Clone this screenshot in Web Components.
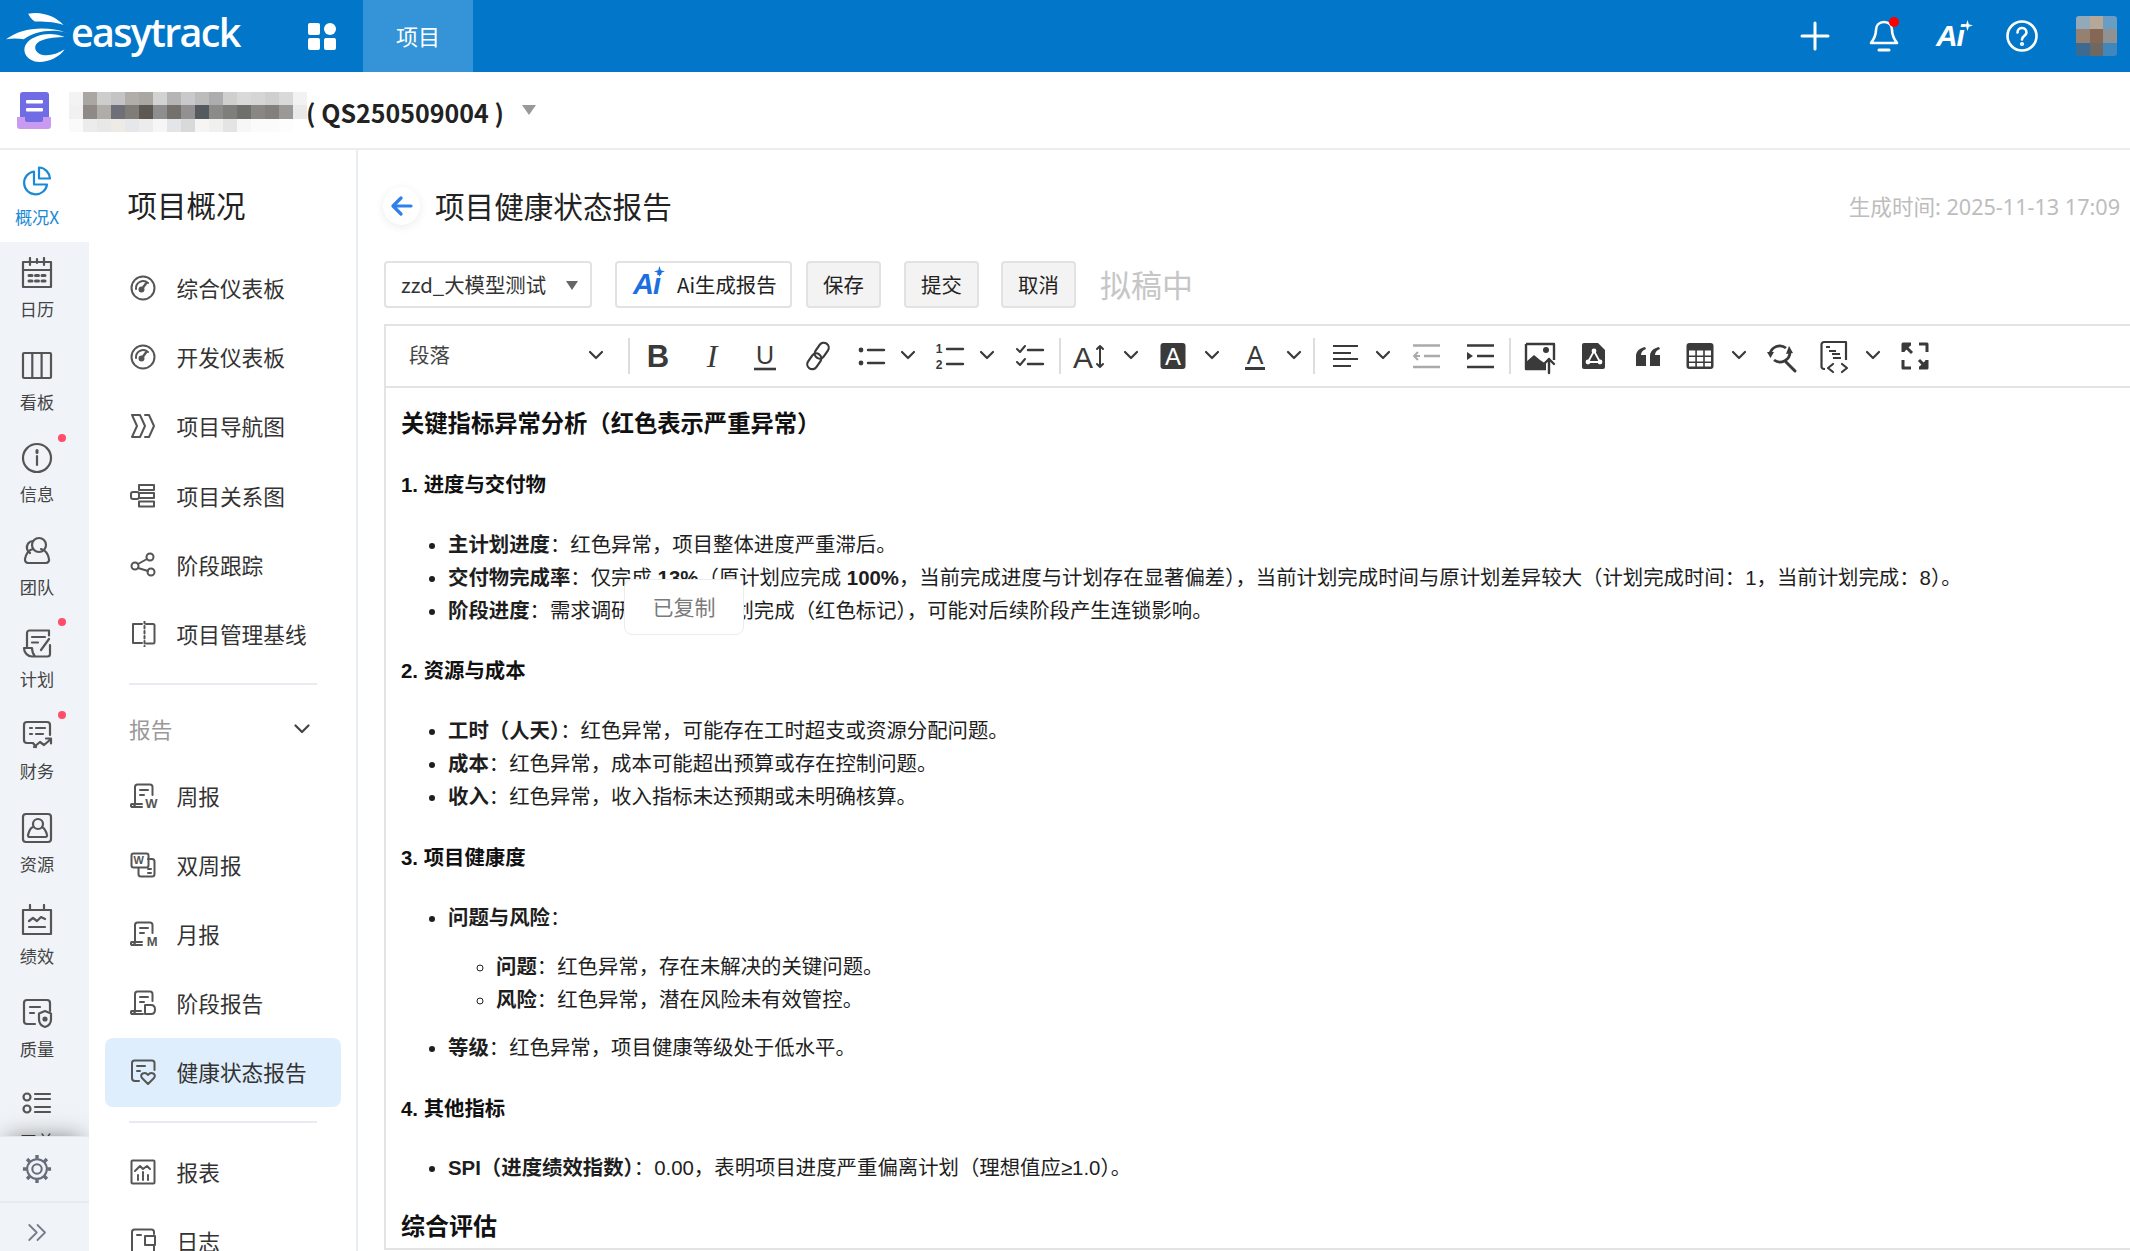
<!DOCTYPE html>
<html lang="zh">
<head>
<meta charset="utf-8">
<title>项目健康状态报告</title>
<style>
  html, body { margin: 0; padding: 0; }
  body {
    width: 2130px;
    height: 1251px;
    overflow: hidden;
    background: #fff;
    font-family: "Noto Sans CJK SC", "Noto Sans", sans-serif;
    display: flex;
    flex-direction: column;
  }
  .row { flex: 1; display: flex; min-height: 0; }
</style>
</head>
<body>
<et-topbar></et-topbar>
<et-projectbar></et-projectbar>
<div class="row">
  <et-rail>
    <et-rail-item icon="pie" active>概况X</et-rail-item>
    <et-rail-item icon="calendar">日历</et-rail-item>
    <et-rail-item icon="board">看板</et-rail-item>
    <et-rail-item icon="info" dot>信息</et-rail-item>
    <et-rail-item icon="team">团队</et-rail-item>
    <et-rail-item icon="plan" dot>计划</et-rail-item>
    <et-rail-item icon="finance" dot>财务</et-rail-item>
    <et-rail-item icon="resource">资源</et-rail-item>
    <et-rail-item icon="perf">绩效</et-rail-item>
    <et-rail-item icon="quality">质量</et-rail-item>
    <et-rail-item icon="orders">工单</et-rail-item>
  </et-rail>
  <et-sidenav>
    <et-nav-item icon="gauge">综合仪表板</et-nav-item>
    <et-nav-item icon="gauge">开发仪表板</et-nav-item>
    <et-nav-item icon="navmap">项目导航图</et-nav-item>
    <et-nav-item icon="relation">项目关系图</et-nav-item>
    <et-nav-item icon="stage">阶段跟踪</et-nav-item>
    <et-nav-item icon="baseline">项目管理基线</et-nav-item>
    <et-nav-group>报告</et-nav-group>
    <et-nav-item icon="week">周报</et-nav-item>
    <et-nav-item icon="biweek">双周报</et-nav-item>
    <et-nav-item icon="month">月报</et-nav-item>
    <et-nav-item icon="phase">阶段报告</et-nav-item>
    <et-nav-item icon="health" active>健康状态报告</et-nav-item>
    <et-nav-rule></et-nav-rule>
    <et-nav-item icon="chart">报表</et-nav-item>
    <et-nav-item icon="log">日志</et-nav-item>
  </et-sidenav>
  <et-report>
    <et-editor>
      <h2>关键指标异常分析（红色表示严重异常）</h2>
      <h3>1. 进度与交付物</h3>
      <ul>
        <li><b>主计划进度</b>：红色异常，项目整体进度严重滞后。</li>
        <li><b>交付物完成率</b>：仅完成 <b>13%</b>（原计划应完成 <b>100%</b>，当前完成进度与计划存在显著偏差），当前计划完成时间与原计划差异较大（计划完成时间：1，当前计划完成：8）。</li>
        <li><b>阶段进度</b>：需求调研阶段未按计划完成（红色标记），可能对后续阶段产生连锁影响。</li>
      </ul>
      <h3>2. 资源与成本</h3>
      <ul>
        <li><b>工时（人天）</b>：红色异常，可能存在工时超支或资源分配问题。</li>
        <li><b>成本</b>：红色异常，成本可能超出预算或存在控制问题。</li>
        <li><b>收入</b>：红色异常，收入指标未达预期或未明确核算。</li>
      </ul>
      <h3>3. 项目健康度</h3>
      <ul>
        <li><b>问题与风险</b>：
          <ul>
            <li><b>问题</b>：红色异常，存在未解决的关键问题。</li>
            <li><b>风险</b>：红色异常，潜在风险未有效管控。</li>
          </ul>
        </li>
        <li><b>等级</b>：红色异常，项目健康等级处于低水平。</li>
      </ul>
      <h3>4. 其他指标</h3>
      <ul>
        <li><b>SPI（进度绩效指数）</b>：0.00，表明项目进度严重偏离计划（理想值应≥1.0）。</li>
      </ul>
      <h2 class="last">综合评估</h2>
    </et-editor>
  </et-report>
</div>

<script>
const SANS = '"Noto Sans CJK SC", "Noto Sans", sans-serif';
const ARIAL = '"Liberation Sans", "Noto Sans CJK SC", sans-serif';
const STAR = 'M6 0l1.400 4.600L12 6 7.400 7.400 6 12 4.600 7.400 0 6l4.600-1.400z';

// all outline icons use currentColor so the host decides the colour
const ICONS = {
  pie: '<path d="M13 6.500a11.500 11.500 0 1 0 13 13H13z"/><path d="M18 2.500c6 .3 10.500 5 11 11H18z"/>',
  calendar: '<path d="M2 5h28v25H2z"/><path d="M2 13h28"/><path d="M9 1v7M16 2v4M23 1v7"/><path stroke-width="3" stroke-dasharray="3 3.500" d="M8 18.500h17M8 24h17"/>',
  board: '<rect x="2" y="3" width="28" height="25" rx="1"/><path d="M11.300 3v25M20.600 3v25"/>',
  info: '<circle cx="16" cy="16" r="14"/><path d="M16 14v9"/><path stroke-width="3" d="M16 8.500v2"/>',
  team: '<circle cx="18" cy="10" r="7"/><path d="M12 14c-4 1-7 5-8 10-.3 2 1 4 3 4h18c2 0 3.500-2 3-4-1-5-4-9-8-10"/><path d="M12 6c-4 0-7 4-6 8 .4 1.500 1.500 3 3 4"/>',
  plan: '<path d="M6 21V6c0-1.500 1-2.500 2.500-2.500H28v5M29 18v9c0 1.500-1 2.500-2.500 2.500H11C7 29.500 3 26 3 21h8c0 3 1 6 3 8.500"/><path d="M11 10h13M11 15.500h6M20 23l8-11"/>',
  finance: '<path d="M15 28l-3-4H6c-2 0-3-1-3-3V6c0-2 1-3 3-3h20c2 0 3 1 3 3v10"/><path d="M9 9h2M15 9h9M9 15h2M15 15h7"/><path d="M13 28l6-5 4 3 7-6M25 19.500h5v5"/>',
  resource: '<rect x="2" y="2" width="28" height="28" rx="3"/><circle cx="17" cy="12" r="5"/><path d="M12 15c-3 1-4 4-5 8 0 1 .5 2 1.500 2h16c1 0 2-1 1.500-2-1-4-3-7-5-8"/>',
  perf: '<path d="M2 6h28v24H2z"/><path d="M9 1v5M23 1v5"/><path d="M8 17l4-3 4 3 4-4 4 2M8 23h16"/>',
  quality: '<path d="M14 27H6c-2 0-3-1-3-3V6c0-2 1-3 3-3h20c2 0 3 1 3 3v8"/><path d="M9 10h10M9 16h4"/><path d="M24 14l6 2.500v6c0 4-3 6.500-6 7.500-3-1-6-3.500-6-7.500v-6z"/><circle cx="24" cy="22" r="1.500" fill="currentColor"/>',
  orders: '<circle cx="6" cy="8" r="3.500"/><circle cx="6" cy="20" r="3.500"/><path d="M14 5h15M14 10h15M14 18h15M14 23h15"/>',
  gauge: '<circle cx="13" cy="13" r="11.500"/><path d="M6 14a7.200 7.200 0 0 1 12-6"/><path d="M11.500 14.500l4.500-6" stroke-width="2.400"/><circle cx="11.500" cy="14.500" r="2" fill="currentColor"/>',
  navmap: '<path d="M2 2h8l5 11-5 11H2l5-11z"/><path d="M15 2h4l5 11-5 11h-4"/>',
  relation: '<rect x="1" y="9" width="8" height="7" rx="2"/><path d="M9 2h15v5H9zM9 10h15v5H9zM9 18.500h15v5H9z"/>',
  stage: '<circle cx="5" cy="14" r="3.500"/><circle cx="20" cy="5" r="3.500"/><circle cx="21" cy="20" r="3.500"/><path d="M8 12l9-5M8 16l10 3"/>',
  baseline: '<path d="M12 3H3v19h9M16 3h7c1 0 1.500.5 1.500 1.500V21c0 1-.5 1.500-1.500 1.500h-7"/><path stroke-dasharray="2.500 2.500" d="M14.500 0v26"/>',
  week: '<path d="M5 21V4c0-1.500 1-2.500 2.500-2.500H20c1.500 0 2.500 1 2.500 2.500v8M5 21c0 2-1 3-3 3h10"/><path d="M10 7h8M10 12h4M2 24c-1.500 0-1.500-3 0-3h10"/>',
  biweek: '<rect x="1.500" y="1.500" width="17" height="14" rx="2"/><path d="M18 7h4c1.500 0 2.500 1 2.500 2.500V22c0 1.500-1 2.500-2.500 2.500H11c-1.500 0-2.500-1-2.500-2.500v-6"/><path d="M18 17h3M18 21h3"/>',
  month: '<path d="M5 21V4c0-1.500 1-2.500 2.500-2.500H20c1.500 0 2.500 1 2.500 2.500v8M5 21c0 2-1 3-3 3h10"/><path d="M10 7h8M10 12h4M2 24c-1.500 0-1.500-3 0-3h10"/>',
  phase: '<path d="M5 21V4c0-1.500 1-2.500 2.500-2.500H20c1.500 0 2.500 1 2.500 2.500v7M5 21c0 2-1 3-3 3h11"/><path d="M10 7h8M10 12h4M2 24c-1.500 0-1.500-3 0-3h9"/><path d="M15 15h6c3 0 4 2 4 4.500S24 24 21 24h-6z"/>',
  health: '<path d="M9 22H5c-2 0-3-1-3-3V4c0-1.500 1-2.500 2.500-2.500H22c1.500 0 2.500 1 2.500 2.500v7"/><path d="M7 7h8M7 12h3"/><path d="M18 25l-6-6c-3-4 3-7 6-3 3-4 9-1 6 3z"/>',
  chart: '<rect x="1.500" y="1.500" width="23" height="23" rx="1"/><path d="M5 12l5-5 3 3 4-3 3 3"/><path stroke-dasharray="2 1" d="M8 21v-6M13 21v-8M18 21v-5"/>',
  log: '<path d="M24 6V4c0-1.500-1-2.500-2.500-2.500H4.500C3 1.500 2 2.500 2 4v19c0 1.500 1 2.500 2.500 2.500h17c1.500 0 2.500-1 2.500-2.500v-5"/><path d="M15 8h10v9H15z"/><path d="M7 7h4"/>',
  gear: '<circle cx="16" cy="16" r="5"/><circle cx="16" cy="16" r="10.500"/><path stroke-width="3.600" stroke-linecap="butt" d="M16 1v4M16 27v4M1 16h4M27 16h4M5.400 5.400l2.800 2.800M23.800 23.800l2.800 2.800M5.400 26.600l2.800-2.800M23.800 8.200l2.800-2.800"/>',
  twin: '<path d="M3 4l10 10L3 24M14 4l10 10-10 10"/>'
};
const SMALL = ['gauge', 'navmap', 'relation', 'stage', 'baseline', 'week', 'biweek', 'month', 'phase', 'health', 'chart', 'log'];

function icon(name, size, stroke) {
  const box = SMALL.includes(name) ? 26 : 32;
  return `<svg width="${size}" height="${size}" viewBox="0 0 ${box} ${box}" fill="none" stroke="currentColor" stroke-width="${stroke}" stroke-linecap="round" stroke-linejoin="round">${ICONS[name]}</svg>`;
}

class EtTopbar extends HTMLElement {
  constructor() {
    super();
    this.shadowDOM = this.attachShadow({ mode: 'open' });
  }

  connectedCallback() {
    const cells = ['#91a9b9', '#b6a898', '#6a9dc4', '#96806f', '#846755', '#8f9192', '#3c6a91', '#6d6862', '#3f87bd'];
    this.shadowDOM.innerHTML = `
      <style>
        :host {
          display: flex;
          align-items: center;
          height: 72px;
          flex: none;
          background: #0277c9;
          color: #fff;
        }
        .logo { display: flex; align-items: center; width: 308px; padding-left: 6px; box-sizing: border-box; }
        .logo span {
          font: 600 39.500px/50px "Open Sans", sans-serif;
          letter-spacing: -1.700px;
          margin-left: 3px;
          margin-top: -8px;
        }
        .apps { width: 55px; display: flex; }
        .tab {
          width: 110px;
          height: 72px;
          background: #3593d8;
          display: flex;
          align-items: center;
          justify-content: center;
          font: 400 22px/30px ${SANS};
          padding-bottom: 2px;
          box-sizing: border-box;
        }
        .tools { margin-left: auto; display: flex; align-items: center; padding-right: 13px; }
        .tool { width: 69px; display: flex; justify-content: center; position: relative; }
        .ai { font: italic 700 30px/32px "Liberation Sans", sans-serif; letter-spacing: -1px; position: relative; padding-right: 6px; }
        .ai svg { position: absolute; right: -3px; top: 0; }
        .dot { position: absolute; width: 10px; height: 10px; border-radius: 50%; background: #f00; left: 40px; top: -3px; }
        .avatar {
          display: grid;
          grid-template-columns: repeat(3, 13.700px);
          grid-auto-rows: 13.400px;
          margin-left: 19.500px;
          border-radius: 3px;
          overflow: hidden;
        }
      </style>
      <div class="logo">
        <svg width="62" height="58" viewBox="7 6 56 52" fill="#fff">
          <path d="M27 12C38 9 52 14 59 22 50 19 40 19 33 19 30 17 28 14 27 12Z"/>
          <path d="M7 35C20 25 42 22 62 29 48 25 32 28 23 35 18 34 12 34 7 35Z"/>
          <path d="M60 33C48 28 34 30 26 38 21 44 24 52 33 55 42 57 55 52 60 44 52 49 43 51 37 48 31 44 33 38 39 36 45 34 53 33 60 33Z"/>
        </svg>
        <span>easytrack</span>
      </div>
      <div class="apps">
        <svg width="28" height="27" viewBox="0 0 28 27" fill="#fff">
          <rect width="12" height="12" rx="2"/><circle cx="22" cy="6" r="6"/>
          <rect y="15" width="12" height="12" rx="2"/><rect x="16" y="15" width="12" height="12" rx="2"/>
        </svg>
      </div>
      <div class="tab">项目</div>
      <div class="tools">
        <div class="tool">
          <svg width="30" height="30" viewBox="0 0 30 30" stroke="#fff" stroke-width="3" stroke-linecap="round"><path d="M15 2v26M2 15h26"/></svg>
        </div>
        <div class="tool">
          <svg width="30" height="32" viewBox="0 0 30 32" fill="none" stroke="#fff" stroke-width="2.600" stroke-linecap="round" stroke-linejoin="round">
            <path d="M15 2c-5 0-8 3.500-8 8 0 6-2 9-5 13h26c-3-4-5-7-5-13 0-4.500-3-8-8-8z"/><path stroke-width="3" d="M10 30h10"/>
          </svg>
          <span class="dot"></span>
        </div>
        <div class="tool"><span class="ai">Ai<svg width="11" height="11" viewBox="0 0 12 12" fill="#fff"><path d="${STAR}"/></svg></span></div>
        <div class="tool">
          <svg width="32" height="32" viewBox="0 0 32 32" fill="none" stroke="#fff" stroke-width="2.600" stroke-linecap="round">
            <circle cx="16" cy="16" r="14.500"/><path d="M11.500 12.500c0-6 9-6 9 0 0 3-4.500 3.500-4.500 7"/><circle cx="16" cy="24" r=".8" fill="#fff"/>
          </svg>
        </div>
        <div class="avatar">${cells.map((c) => `<span style="background:${c}"></span>`).join('')}</div>
      </div>
    `;
  }
}

class EtProjectbar extends HTMLElement {
  constructor() {
    super();
    this.shadowDOM = this.attachShadow({ mode: 'open' });
  }

  connectedCallback() {
    // blurred project name, kept as a mosaic like in the screenshot
    const rows = [
      '#f3f3f3 #aaa6a2 #cdcdcd #c4c4c4 #b1aeaa #aaa7a3 #d2d2d2 #b5b5b5 #c9c9cb #bcbcbc #adadb0 #cfcfcd #d9d9d9 #d5d5d5 #cfcfcf #d9d9d9 #f2f2f2',
      '#f1f1f1 #8f8a85 #b0ada9 #6e6f78 #807d78 #5e5852 #8e8e8e #74706c #929190 #555a60 #8b8b8a #7e7e7c #6f6f6d #888785 #827f7c #9a9996 #e9e9e9',
      '#fafafa #ececec #e8e8e8 #eeeae6 #e5e7ea #ececec #f6f6f6 #e3e5e8 #d9d9d9 #f7f5f3 #f0f0f0 #e4e4e4 #f7f7f7 #fbfbfb #fbfbfb #fdfdfd #fff'
    ];
    const cells = rows.join(' ').split(' ').map((c) => `<span style="background:${c}"></span>`).join('');
    this.shadowDOM.innerHTML = `
      <style>
        :host {
          display: flex;
          align-items: center;
          height: 78px;
          flex: none;
          box-sizing: border-box;
          border-bottom: 2px solid #ececec;
          padding-left: 17px;
          background: #fff;
          position: relative;
          z-index: 2;
        }
        .mosaic {
          display: grid;
          grid-template-columns: repeat(17, 14px);
          grid-auto-rows: 13.400px;
          margin-left: 18px;
          margin-top: 4px;
        }
        .code {
          font: 700 25px/34px ${SANS};
          color: #222;
          margin-top: 4px;
          margin-left: -1px;
          white-space: pre;
        }
        .caret { width: 0; height: 0; border: 7.500px solid transparent; border-top: 10px solid #999; border-bottom: 0; margin: 0 0 0 18px; }
      </style>
      <svg width="34" height="37" viewBox="0 0 34 37">
        <path d="M3 3a3 3 0 0 1 3-3h23a3 3 0 0 1 3 3v22H3z" fill="#6f6ce6"/>
        <rect x="9" y="8" width="17" height="3.500" rx="1" fill="#fff"/>
        <rect x="9" y="16" width="17" height="3.500" rx="1" fill="#fff"/>
        <path d="M0 25h34v9a3 3 0 0 1-3 3H3a3 3 0 0 1-3-3z" fill="#c89bf0"/>
        <path d="M8 25h18v3a2 2 0 0 1-2 2H10a2 2 0 0 1-2-2z" fill="#6f6ce6"/>
      </svg>
      <div class="mosaic">${cells}</div>
      <div class="code">( QS250509004 )</div>
      <div class="caret"></div>
    `;
  }
}

class EtRail extends HTMLElement {
  constructor() {
    super();
    this.shadowDOM = this.attachShadow({ mode: 'open' });
  }

  connectedCallback() {
    this.shadowDOM.innerHTML = `
      <style>
        :host {
          display: flex;
          flex-direction: column;
          width: 89px;
          flex: none;
          background: #f0f4f8;
          color: #555;
          position: relative;
          overflow: hidden;
        }
        .items { flex: 1; min-height: 0; overflow: hidden; }
        .bottom {
          flex: none;
          height: 115px;
          background: #f0f4f8;
          border-top: 1px solid #e3e8f0;
          box-shadow: 0 -6px 22px -8px rgba(0, 0, 0, .5);
          box-sizing: border-box;
          position: relative;
        }
        .set { height: 64px; border-bottom: 2px solid #e6eaf2; display: flex; align-items: center; justify-content: center; color: #666c78; padding-right: 15px; }
        .more { height: 49px; box-sizing: border-box; display: flex; align-items: center; justify-content: center; color: #767c88; padding: 12px 12px 0 0; }
      </style>
      <div class="items"><slot></slot></div>
      <div class="bottom">
        <div class="set">${icon('gear', 30, 2.2)}</div>
        <div class="more">${icon('twin', 24, 2.4)}</div>
      </div>
    `;
  }
}

class EtRailItem extends HTMLElement {
  constructor() {
    super();
    this.shadowDOM = this.attachShadow({ mode: 'open' });
  }

  connectedCallback() {
    this.shadowDOM.innerHTML = `
      <style>
        :host {
          display: flex;
          flex-direction: column;
          align-items: center;
          height: 92.400px;
          box-sizing: border-box;
          padding: 15px 15px 0 0;
          position: relative;
          font: 400 17.200px/24px ${SANS};
          color: #444;
        }
        :host([active]) { background: #fff; color: #1b8ad6; }
        svg { color: #555; display: block; }
        :host([active]) svg { color: #1b8ad6; }
        .label { margin-top: 8px; white-space: nowrap; }
        .dot { position: absolute; left: 58px; top: 6.500px; width: 8px; height: 8px; border-radius: 50%; background: #ff4d6a; }
      </style>
      ${icon(this.getAttribute('icon'), 32, 2.2)}
      <div class="label"><slot></slot></div>
      ${this.hasAttribute('dot') ? '<span class="dot"></span>' : ''}
    `;
  }
}

class EtSidenav extends HTMLElement {
  constructor() {
    super();
    this.shadowDOM = this.attachShadow({ mode: 'open' });
  }

  connectedCallback() {
    this.shadowDOM.innerHTML = `
      <style>
        :host {
          display: block;
          width: 269px;
          flex: none;
          box-sizing: border-box;
          border-right: 2px solid #e8edf3;
          padding-left: 16px;
          overflow: hidden;
          background: #fff;
        }
        h1 {
          margin: 0 0 0 22.500px;
          height: 103.400px;
          box-sizing: border-box;
          padding-top: 34px;
          font: 400 29.500px/40px ${SANS};
          color: #222;
        }
      </style>
      <h1>项目概况</h1>
      <slot></slot>
    `;
  }
}

class EtNavItem extends HTMLElement {
  constructor() {
    super();
    this.shadowDOM = this.attachShadow({ mode: 'open' });
  }

  connectedCallback() {
    const ltr = { week: 'W', month: 'M' }[this.getAttribute('icon')];
    const big = this.getAttribute('icon') === 'biweek' ? 'W' : '';
    this.shadowDOM.innerHTML = `
      <style>
        :host {
          display: flex;
          align-items: center;
          width: 236px;
          height: 69.200px;
          box-sizing: border-box;
          padding-left: 24.500px;
          font: 400 21.700px/30px ${SANS};
          color: #333;
          border-radius: 8px;
        }
        :host([active]) { background: #deeefc; }
        .ic { width: 26px; height: 26px; color: #555; margin-right: 21px; position: relative; flex: none; }
        .ic svg { display: block; }
        .ltr { position: absolute; right: -2px; bottom: -1px; font: 700 13px/13px "Liberation Sans", sans-serif; color: #555; background: #fff; padding-left: 1px; }
        .big { position: absolute; left: 4px; top: 3px; font: 700 11px/11px "Liberation Sans", sans-serif; color: #555; }
      </style>
      <div class="ic">${icon(this.getAttribute('icon'), 26, 2)}${ltr ? `<span class="ltr">${ltr}</span>` : ''}${big ? `<span class="big">${big}</span>` : ''}</div>
      <slot></slot>
    `;
  }
}

class EtNavGroup extends HTMLElement {
  constructor() {
    super();
    this.shadowDOM = this.attachShadow({ mode: 'open' });
  }

  connectedCallback() {
    this.shadowDOM.innerHTML = `
      <style>
        :host {
          display: flex;
          align-items: center;
          justify-content: space-between;
          width: 188px;
          height: 73px;
          box-sizing: border-box;
          margin: 14px 0 5.500px 24px;
          padding-top: 17.800px;
          border-top: 2px solid #e8ecf1;
          font: 400 21.700px/30px ${SANS};
          color: #999;
        }
        svg { margin-right: 7px; }
      </style>
      <slot></slot>
      <svg width="16" height="10" viewBox="0 0 16 10" fill="none" stroke="#444" stroke-width="2.200" stroke-linecap="round" stroke-linejoin="round"><path d="M1.500 1.500L8 8l6.500-6.500"/></svg>
    `;
  }
}

class EtNavRule extends HTMLElement {
  constructor() {
    super();
    this.attachShadow({ mode: 'open' }).innerHTML = `
      <style>
        :host { display: block; width: 188px; height: 2px; margin: 14px 0 14.400px 24px; background: #e8ecf1; }
      </style>
    `;
  }
}

class EtReport extends HTMLElement {
  constructor() {
    super();
    this.shadowDOM = this.attachShadow({ mode: 'open' });
  }

  connectedCallback() {
    this.shadowDOM.innerHTML = `
      <style>
        :host {
          display: flex;
          flex-direction: column;
          flex: 1;
          min-width: 0;
          box-sizing: border-box;
          padding: 37px 0 1px 26px;
          position: relative;
        }
        .head { display: flex; align-items: center; height: 38px; }
        .back {
          width: 37px;
          height: 38px;
          border-radius: 50%;
          background: #fff;
          box-shadow: 0 2px 10px rgba(0, 0, 0, .08);
          display: flex;
          align-items: center;
          justify-content: center;
          margin-left: -1px;
        }
        h1 { margin: 0 0 0 15px; font: 400 29.600px/40px ${SANS}; color: #222; }
        .time { margin-left: auto; padding: 2px 10px 0 0; font: 400 21.600px/30px "Noto Sans", "Noto Sans CJK SC", sans-serif; color: #bdbdbd; }
        .actions { display: flex; align-items: center; height: 47px; margin-top: 36px; font: 400 20.400px/28px ${SANS}; color: #333; }
        .actions > * { box-sizing: border-box; height: 47px; padding-bottom: 2px; border: 2px solid #e2e2e2; border-radius: 4px; display: flex; align-items: center; }
        .select { width: 208px; padding-left: 15px; position: relative; }
        .select::after { content: ""; position: absolute; left: 180px; top: 18px; border: 6px solid transparent; border-top: 9px solid #666; border-bottom: 0; }
        .aibtn { width: 177px; margin-left: 23px; padding-left: 16px; background: #fff; color: #222; }
        .aimark { font: italic 700 29px/32px "Liberation Sans", sans-serif; color: #1c6fe0; letter-spacing: -1px; width: 44px; position: relative; flex: none; }
        .aimark svg { position: absolute; left: 21px; top: -2px; }
        .btn { width: 75px; justify-content: center; background: #f3f3f3; color: #222; }
        .actions > .state { border: 0; margin-left: 24px; font-size: 31px; color: #c6c6c6; }
      </style>
      <div class="head">
        <div class="back">
          <svg width="22" height="20" viewBox="0 0 22 20" fill="none" stroke="#2f80ed" stroke-width="3.200" stroke-linecap="round" stroke-linejoin="round"><path d="M20 10H2.500M10 2l-8 8 8 8"/></svg>
        </div>
        <h1>项目健康状态报告</h1>
        <div class="time">生成时间: 2025-11-13 17:09</div>
      </div>
      <div class="actions">
        <div class="select">zzd_大模型测试</div>
        <div class="aibtn"><span class="aimark">Ai<svg width="11" height="11" viewBox="0 0 12 12" fill="#1c6fe0"><path d="${STAR}"/></svg></span>Ai生成报告</div>
        <div class="btn" style="margin-left:14px">保存</div>
        <div class="btn" style="margin-left:23px">提交</div>
        <div class="btn" style="margin-left:22px">取消</div>
        <div class="state">拟稿中</div>
      </div>
      <slot></slot>
    `;
  }
}

// toolbar glyphs: [kind, centre x on the page]
const TOOLS = [
  ['chev', 596], ['sep', 628.5], ['bold', 658], ['ital', 712], ['under', 765], ['link', 818],
  ['ul', 871], ['chev', 908], ['ol', 950], ['chev', 987], ['check', 1030], ['sep', 1060],
  ['size', 1089], ['chev', 1131], ['mark', 1172.5], ['chev', 1212], ['color', 1254.5], ['chev', 1294], ['sep', 1314],
  ['align', 1344.5], ['chev', 1383], ['outdent', 1425.5], ['indent', 1479], ['sep', 1510],
  ['image', 1541], ['file', 1593.5], ['quote', 1647.5], ['table', 1699.5], ['chev', 1739],
  ['search', 1782], ['source', 1833.5], ['chev', 1873], ['full', 1914.5]
];

const DARK = '#3a3a3a';
const T_ICONS = {
  chev: [16, '<path d="M2 11l6 6 6-6" fill="none" stroke-width="2.200"/>'],
  sep: [2, '<path d="M1 -3v36" stroke="#ddd" stroke-width="2" stroke-linecap="butt"/>'],
  bold: [30, `<text x="15" y="26" text-anchor="middle" font-family="Liberation Sans" font-weight="700" font-size="31" fill="${DARK}" stroke="none">B</text>`],
  ital: [30, `<text x="15" y="26" text-anchor="middle" font-family="Liberation Serif" font-style="italic" font-size="32" fill="${DARK}" stroke="none">I</text>`],
  under: [30, `<text x="15" y="23" text-anchor="middle" font-family="Liberation Sans" font-size="25" fill="${DARK}" stroke="none">U</text><path d="M4 28h22" stroke-width="2.600" stroke-linecap="butt"/>`],
  link: [30, '<g transform="rotate(-55 15 15)" fill="none" stroke-width="2.200"><rect x="0" y="10" width="17" height="10" rx="5"/><rect x="13" y="10" width="17" height="10" rx="5"/></g>'],
  ul: [30, `<circle cx="5" cy="9" r="2.400" fill="${DARK}" stroke="none"/><circle cx="5" cy="22" r="2.400" fill="${DARK}" stroke="none"/><path d="M12 9h16M12 22h16" stroke-width="2.400"/>`],
  ol: [30, `<text x="4" y="12" text-anchor="middle" font-family="Liberation Sans" font-weight="700" font-size="12" fill="${DARK}" stroke="none">1</text><text x="4" y="28" text-anchor="middle" font-family="Liberation Sans" font-weight="700" font-size="12" fill="${DARK}" stroke="none">2</text><path d="M12 8h16M12 23h16" stroke-width="2.400"/>`],
  check: [30, '<path d="M2 8l3 3 5-6M2 21l3 3 5-6" fill="none" stroke-width="2"/><path d="M13 9h15M13 23h15" stroke-width="2.400"/>'],
  size: [32, `<text x="10" y="27" text-anchor="middle" font-family="Liberation Sans" font-size="30" fill="${DARK}" stroke="none">A</text><path d="M27 5v21M24 8l3-3 3 3M24 23l3 3 3-3" fill="none" stroke-width="2"/>`],
  mark: [30, `<rect x="2.500" y="2" width="25" height="26" rx="3" fill="${DARK}" stroke="none"/><text x="15" y="24" text-anchor="middle" font-family="Liberation Sans" font-size="24" fill="#fff" stroke="none">A</text>`],
  color: [30, `<text x="15" y="23" text-anchor="middle" font-family="Liberation Sans" font-size="25" fill="${DARK}" stroke="none">A</text><path d="M5 27.500h20" stroke-width="3" stroke-linecap="butt"/>`],
  align: [30, '<path d="M3 5h25M3 12h18M3 18h25M3 25h18" stroke-width="2.200" stroke-linecap="butt"/>'],
  outdent: [30, '<g stroke="#aaa" stroke-width="2.400" stroke-linecap="butt"><path d="M2 4.500h27M13 15h16M2 26h27"/><path d="M9 15H3M7 11l-4 4 4 4" fill="none" stroke-width="2"/></g>'],
  indent: [30, '<path d="M3 4.500h27M13 15h17M3 26h27" stroke-width="2.400" stroke-linecap="butt"/><path d="M3 11l6 4-6 4z" stroke="none"/>'],
  image: [34, `<path d="M2 3h28v16M22 28H2V3" fill="none" stroke-width="2.400" stroke-linecap="butt"/><path d="M2 28v-7l8-7 6 5 6 4v5z" stroke="none"/><circle cx="22" cy="9" r="3" stroke="none"/><path d="M25 32V18M20 23l5-5 5 5" fill="none" stroke-width="2.400"/>`],
  file: [30, `<path d="M5 2h14l7 7v17a2 2 0 0 1-2 2H5a2 2 0 0 1-2-2V4a2 2 0 0 1 2-2z" stroke="none"/><path d="M15 10l-6 11h12z" fill="none" stroke="#fff" stroke-width="1.800"/><circle cx="15" cy="10" r="2.400" fill="#fff" stroke="none"/><circle cx="9" cy="21" r="2.400" fill="#fff" stroke="none"/><circle cx="21" cy="21" r="2.400" fill="#fff" stroke="none"/>`],
  quote: [30, '<path d="M3 25V15c0-5 4-8 9-9l1 2c-3 1-5 3-5 6h5v11zM17 25V15c0-5 4-8 9-9l1 2c-3 1-5 3-5 6h5v11z" stroke="none"/>'],
  table: [30, '<rect x="1.500" y="2" width="27" height="26" rx="3" stroke="none"/><g fill="#fff" stroke="none"><path d="M4 9.500h6.300v5H4zM11.900 9.500h6.300v5h-6.300zM19.800 9.500H26v5h-6.200zM4 16h6.300v4.500H4zM11.900 16h6.300v4.500h-6.300zM19.800 16H26v4.500h-6.200zM4 22h6.300v3.500H4zM11.900 22h6.300v3.500h-6.300zM19.800 22H26v3.500h-6.200z"/></g>'],
  search: [32, '<path d="M4 13a10 10 0 0 1 16-6M24 11a10 10 0 0 1-16 8" fill="none" stroke-width="2.800" stroke-linecap="butt"/><path d="M1 11h7l-3.500 6zM20 13l3-8 4 7z" stroke="none"/><path d="M20 21l9 9" stroke-width="3"/>'],
  source: [30, '<path d="M6 28H5a2.500 2.500 0 0 1-2.500-2.500V3.500A2.500 2.500 0 0 1 5 1h22v18" fill="none" stroke-width="2.200" stroke-linecap="butt"/><path d="M7 6h4M10 10h7M13 13h8M14 17h8" stroke-width="1.800" stroke-linecap="butt"/><path d="M14 24l-5 4 5 4M23 24l5 4-5 4" fill="none" stroke-width="2.200" transform="translate(0 -1)"/>'],
  full: [30, '<path d="M3 11V3h8M19 3h8v8M3 19v8h8M27 19v8h-8" fill="none" stroke-width="3" stroke-linecap="butt"/><path d="M5 5l7 7M26 26l-7-7" stroke-width="3" stroke-linecap="butt"/><path d="M4 4h7L4 11zM26 26h-7l7-7z" stroke="none"/>']
};

class EtEditor extends HTMLElement {
  constructor() {
    super();
    this.shadowDOM = this.attachShadow({ mode: 'open' });
  }

  connectedCallback() {
    let cursor = 386 + 23 + 44; // right edge of the 段落 label
    const tools = TOOLS.map(([kind, cx]) => {
      const [w, body] = T_ICONS[kind];
      const gap = cx - w / 2 - cursor;
      cursor = cx + w / 2;
      return `<svg style="margin-left:${gap}px" width="${w}" height="30" viewBox="0 0 ${w} 30" stroke="${DARK}" fill="${DARK}" stroke-linecap="round" stroke-linejoin="round">${body}</svg>`;
    }).join('');

    this.shadowDOM.innerHTML = `
      <style>
        :host {
          display: flex;
          flex-direction: column;
          flex: 1;
          min-height: 0;
          margin-top: 16px;
          border: 2px solid #e3e3e3;
          border-right: 0;
          position: relative;
          overflow: hidden;
          background: #fff;
        }
        .bar {
          display: flex;
          align-items: center;
          height: 60px;
          flex: none;
          border-bottom: 2px solid #e3e3e3;
          box-sizing: content-box;
        }
        .bar .para { width: 44px; margin-left: 23px; flex: none; font: 400 20.400px/28px ${SANS}; color: #444; white-space: nowrap; margin-top: -4px; }
        .bar svg { flex: none; overflow: visible; }
        .body { flex: 1; min-height: 0; overflow: hidden; padding: 19px 0 0 15px; font: 400 20.400px/33px ${ARIAL}; color: #1e1e1e; }
        ::slotted(h2) { margin: 0 0 27.500px; font: 700 23.300px/34px ${ARIAL}; color: #111; }
        ::slotted(h2.last) { margin: 24.500px 0 0; font-size: 24px; }
        ::slotted(h3) { margin: 27.800px 0 26.800px; font: 700 20.400px/33px ${ARIAL}; color: #111; }
        ::slotted(ul) { margin: 0; padding-left: 47px; }
        .toast {
          position: absolute;
          left: 238px;
          top: 253px;
          width: 120px;
          height: 56px;
          box-sizing: border-box;
          background: #fff;
          border: 1px solid #ececec;
          border-radius: 8px;
          display: flex;
          align-items: center;
          justify-content: center;
          font: 400 21px/28px ${SANS};
          color: #7b7b7b;
          padding-bottom: 3px;
        }
      </style>
      <div class="bar"><span class="para">段落</span>${tools}</div>
      <div class="body"><slot></slot></div>
      <div class="toast">已复制</div>
    `;
    // nested lists sit in the light DOM, ::slotted cannot reach them
    this.querySelectorAll('ul ul').forEach((u) => {
      u.style.cssText = 'margin:16px 0 15px;padding-left:48px;list-style:circle';
    });
  }
}

customElements.define('et-topbar', EtTopbar);
customElements.define('et-projectbar', EtProjectbar);
customElements.define('et-rail', EtRail);
customElements.define('et-rail-item', EtRailItem);
customElements.define('et-sidenav', EtSidenav);
customElements.define('et-nav-item', EtNavItem);
customElements.define('et-nav-group', EtNavGroup);
customElements.define('et-nav-rule', EtNavRule);
customElements.define('et-report', EtReport);
customElements.define('et-editor', EtEditor);
</script>
</body>
</html>
